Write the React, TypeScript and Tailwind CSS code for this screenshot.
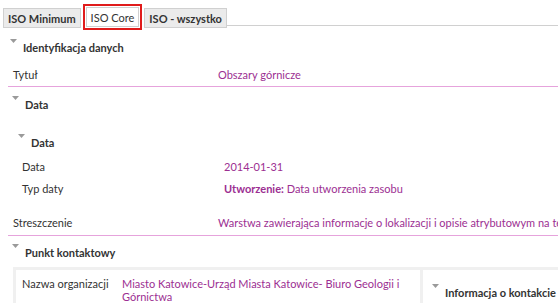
import React from 'react'

const font = { fontFamily: 'Lato, "Liberation Sans", Arial, sans-serif' }

function Caret() {
  return (
    <svg width="7" height="5" viewBox="0 0 7 5" className="shrink-0 self-start mt-[1px]">
      <path d="M0 0 L7 0 L3.5 4 Z" fill="#9a9a9a" />
    </svg>
  )
}

function Heading({ children, className = '' }: { children: React.ReactNode; className?: string }) {
  return (
    <div className={`flex items-start gap-[6px] ${className}`}>
      <Caret />
      <span className="font-bold text-[#333] mt-[3px]">{children}</span>
    </div>
  )
}

export default function App() {
  return (
    <div className="w-[558px] h-[307px] overflow-hidden bg-white text-[11px] leading-[13px] text-[#333]" style={font}>
      {/* Tabs */}
      <div className="flex items-end pl-[3px] pt-[4px]">
        <div className="h-[20px] px-[4px] flex items-center bg-[#ebebeb] border border-[#d0d0d0] font-bold mb-[2px]">ISO Minimum</div>
        <div className="ml-[2px] border-[2px] border-[#e01b1b] p-[1px]">
          <div className="h-[20px] px-[4px] flex items-center bg-white border border-[#d0d0d0]">ISO Core</div>
        </div>
        <div className="ml-[2px] h-[20px] px-[4px] flex items-center bg-[#ebebeb] border border-[#d0d0d0] font-bold mb-[2px]">ISO - wszystko</div>
        <div className="flex-1 border-b border-[#d0d0d0] mb-[4px]" />
      </div>

      <Heading className="pl-[10px] mt-[8px]">Identyfikacja danych</Heading>

      <div className="ml-[8px] mt-[14px] flex border-b border-[#e6a3dc] pb-[5px]">
        <div className="w-[210px] pl-[5px]">Tytuł</div>
        <div className="text-[#9c2f92]">Obszary górnicze</div>
      </div>

      <Heading className="pl-[12px] mt-[8px]">Data</Heading>
      <Heading className="pl-[18px] mt-[22px]">Data</Heading>

      <div className="ml-[8px] mt-[11px] flex">
        <div className="w-[216px] pl-[14px]">Data</div>
        <div className="text-[#9c2f92]">2014-01-31</div>
      </div>
      <div className="ml-[8px] mt-[9px] flex">
        <div className="w-[216px] pl-[14px]">Typ daty</div>
        <div className="text-[#9c2f92]"><span className="font-bold">Utworzenie:</span> Data utworzenia zasobu</div>
      </div>

      <div className="ml-[8px] mt-[21px] flex border-b border-[#e6a3dc] pb-[6px] whitespace-nowrap">
        <div className="w-[210px] pl-[5px] shrink-0">Streszczenie</div>
        <div className="text-[#9c2f92]">Warstwa zawierająca informacje o lokalizacji i opisie atrybutowym na temat obszarów górniczych</div>
      </div>

      <Heading className="pl-[12px] mt-[7px]">Punkt kontaktowy</Heading>

      <div className="ml-[13px] mt-[8px] flex border-t-[3px] border-l-[3px] border-[#f0f0f0]">
        <div className="w-[407px] flex pt-[7px] pl-[6px] border-r-[3px] border-[#f0f0f0]">
          <div className="w-[100px] shrink-0">Nazwa organizacji</div>
          <div className="text-[#9c2f92] w-[285px]">Miasto Katowice-Urząd Miasta Katowice- Biuro Geologii i Górnictwa</div>
        </div>
        <div className="flex-1 pl-[9px] pt-[13px]">
          <Heading>Informacja o kontakcie</Heading>
        </div>
      </div>
    </div>
  )
}
